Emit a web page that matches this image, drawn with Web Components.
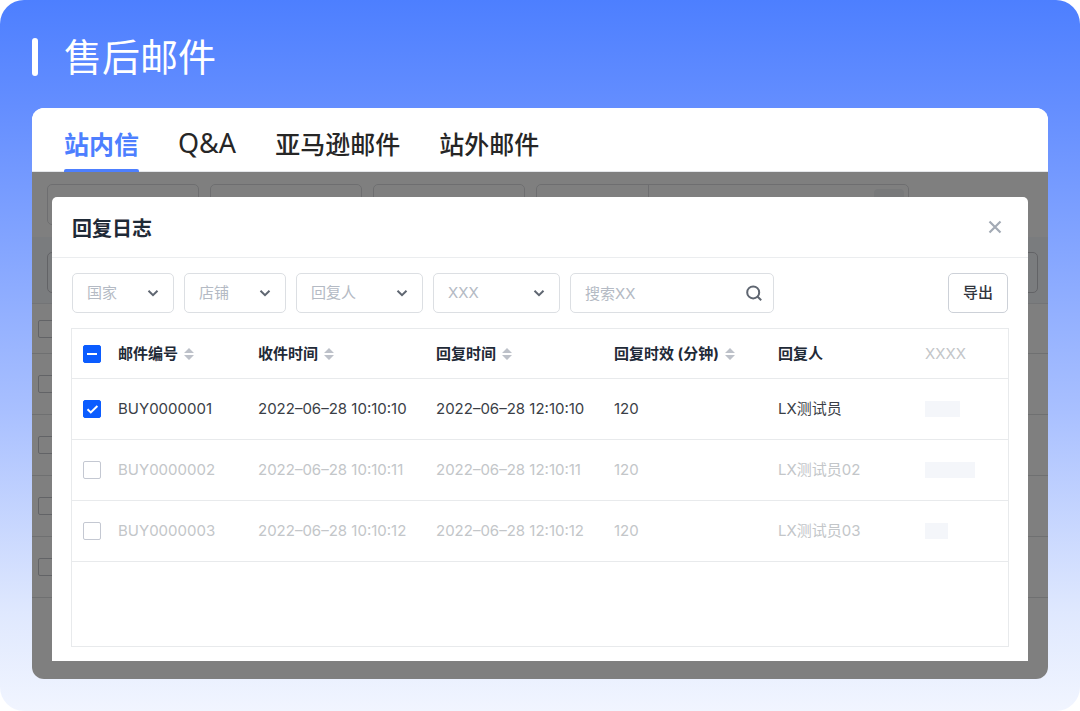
<!DOCTYPE html>
<html lang="zh-CN">
<head>
<meta charset="utf-8">
<meta name="viewport" content="width=device-width, initial-scale=1">
<title>售后邮件</title>
<style>
  body {
    margin: 0;
    background: #fff;
    font-family: Inter, "Noto Sans CJK SC", sans-serif;
    font-size: 15px;
    line-height: 20px;
    --line: #e8eaec;
    --field-line: #dcdfe3;
    --muted: #b4bac4;
    --ink: #1f2a37;
    --primary: #0b5cff;
  }
</style>
</head>
<body>
<mail-page>
  <page-heading slot="heading">售后邮件</page-heading>
  <tab-bar slot="tabs"></tab-bar>
  <mail-backdrop slot="backdrop"></mail-backdrop>
  <log-dialog heading="回复日志">
    <filter-bar slot="filters">
      <filter-select label="国家" size="small"></filter-select>
      <filter-select label="店铺" size="small"></filter-select>
      <filter-select label="回复人"></filter-select>
      <filter-select label="XXX"></filter-select>
      <search-field label="搜索XX"></search-field>
      <export-button slot="action">导出</export-button>
    </filter-bar>
    <log-table></log-table>
  </log-dialog>
</mail-page>

<script>
function component(name, html, setup) {
  const template = document.createElement('template');
  template.innerHTML = html;
  customElements.define(name, class extends HTMLElement {
    constructor() {
      super();
      this.attachShadow({ mode: 'open' }).append(template.content.cloneNode(true));
    }
    connectedCallback() {
      if (setup && !this.ready) {
        this.ready = true;
        setup(this, this.shadowRoot);
      }
    }
  });
}

component('mail-page', `
  <style>
    :host {
      display: block; box-sizing: border-box; min-height: 100vh;
      padding: 33px 32px 32px; border-radius: 24px;
      background: linear-gradient(180deg, #4d7fff 0%, #648eff 15%, #a9c0ff 58%, #dfe8fe 86%, #f1f5ff 100%);
    }
    .card { margin-top: 27px; border-radius: 12px; overflow: hidden; background: #fff; }
    .stage { position: relative; padding: 25px 20px 18px; }
    .behind { position: absolute; inset: 0; overflow: hidden; }
    .mask { position: absolute; inset: 0; background: rgba(0, 0, 0, .5); }
    .front { position: relative; }
  </style>
  <slot name="heading"></slot>
  <main class="card">
    <slot name="tabs"></slot>
    <div class="stage">
      <div class="behind" aria-hidden="true" inert><slot name="backdrop"></slot></div>
      <div class="mask"></div>
      <div class="front"><slot></slot></div>
    </div>
  </main>`);

component('page-heading', `
  <style>
    :host { display: flex; align-items: center; gap: 26px; height: 48px; color: #fff; }
    .bar { width: 6px; height: 38px; border-radius: 3px; background: #fff; }
    h1 { margin: 0 0 4px; font: 400 38px/44px "Noto Sans CJK SC", sans-serif; }
  </style>
  <span class="bar"></span><h1><slot></slot></h1>`);

component('tab-bar', `
  <style>
    :host { display: block; position: relative; z-index: 1; background: #fff; border-bottom: 1px solid #e4e6ea; }
    nav { display: flex; gap: 39px; padding: 0 32px; height: 63px; }
    a {
      position: relative; display: flex; align-items: center; padding-top: 7px; color: #262626;
      font: 500 25px/36px "Noto Sans CJK SC", sans-serif; text-decoration: none;
    }
    a[aria-current] { color: #4d7fff; font-weight: 700; }
    a[aria-current]::after {
      content: ""; position: absolute; left: 0; right: 0; bottom: -1px;
      height: 3px; border-radius: 2px 2px 0 0; background: #4d7fff;
    }
    .latin { font: 400 27px/36px "Noto Sans", sans-serif; }
  </style>
  <nav>
    <a href="#inbox" aria-current="page">站内信</a>
    <a href="#qa" class="latin">Q&amp;A</a>
    <a href="#amazon">亚马逊邮件</a>
    <a href="#external">站外邮件</a>
  </nav>`);

component('check-box', `
  <style>
    :host { display: grid; width: 18px; height: 18px; }
    input, svg { grid-area: 1 / 1; width: 18px; height: 18px; }
    input {
      appearance: none; box-sizing: border-box; margin: 0;
      border: 1px solid var(--box-line, #c4c8d2); border-radius: 2px; background: var(--box-fill, #fff);
    }
    input:checked, input:indeterminate { background: var(--primary); border-color: var(--primary); }
    svg { fill: none; stroke: #fff; stroke-width: 2; pointer-events: none; }
    path { display: none; }
    input:checked ~ svg .tick, input:indeterminate ~ svg .dash { display: inline; }
  </style>
  <input type="checkbox">
  <svg viewBox="0 0 18 18" aria-hidden="true">
    <path class="tick" d="M4.5 9.2 7.8 12.4 14.4 6"/>
    <path class="dash" d="M4 9H14"/>
  </svg>`, (host, root) => {
  const input = root.querySelector('input');
  input.setAttribute('aria-label', host.getAttribute('label') || '选择');
  input.checked = host.getAttribute('state') === 'on';
  input.indeterminate = host.getAttribute('state') === 'mixed';
});

component('mail-backdrop', `
  <style>
    :host { display: block; --box-line: #c4c6cc; --box-fill: transparent; }
    .row { display: flex; gap: 11px; padding: 12px 10px 12px 15px; }
    .field { box-sizing: border-box; width: 152px; height: 41px; border: 1px solid #dcdde0; border-radius: 5px; }
    .wide { display: flex; justify-content: flex-end; width: 373px; }
    .wide::before { content: ""; width: 1px; margin: 0 auto 0 111px; background: #dcdde0; }
    .chip { width: 30px; height: 30px; margin: 4px; border-radius: 4px; background: #f0f2f5; }
    .tools { justify-content: space-between; padding: 15px 10px 10px 15px; background: #f5f8fc; border-bottom: 1px solid #e6e8ec; }
    .tools .field { border-color: #c4c6cc; }
    .item { box-sizing: border-box; display: flex; align-items: center; height: 61px; padding-left: 6px; border-bottom: 1px solid #dfe0e3; }
    .head { height: 50px; }
  </style>
  <div class="row">
    <div class="field"></div><div class="field"></div><div class="field"></div>
    <div class="field wide"><div class="chip"></div></div>
  </div>
  <div class="row tools"><div class="field"></div><div class="field"></div></div>
  <div class="item head"><check-box></check-box></div>
  <div class="item"><check-box></check-box></div>
  <div class="item"><check-box></check-box></div>
  <div class="item"><check-box></check-box></div>
  <div class="item"><check-box></check-box></div>`);

component('log-dialog', `
  <style>
    :host { display: block; border-radius: 5px 5px 0 0; background: #fff; }
    header {
      display: flex; align-items: center; justify-content: space-between;
      height: 60px; padding: 0 26px 0 20px; border-bottom: 1px solid #ebedef;
    }
    h2 { margin: 0; padding-top: 3px; color: var(--ink); font-size: 20px; line-height: 28px; font-weight: 700; }
    button { display: grid; padding: 0; border: 0; background: none; }
    svg { width: 14px; height: 14px; fill: none; stroke: #a3aab5; stroke-width: 2.2; }
    .body { padding: 15px 19px 14px; }
  </style>
  <section role="dialog" aria-labelledby="title">
    <header>
      <h2 id="title"></h2>
      <button type="button" aria-label="关闭"><svg viewBox="0 0 14 14"><path d="M1.5 1.5 12.5 12.5M12.5 1.5 1.5 12.5"/></svg></button>
    </header>
    <div class="body"><slot name="filters"></slot><slot></slot></div>
  </section>`, (host, root) => {
  root.querySelector('h2').textContent = host.getAttribute('heading');
});

component('filter-bar', `
  <style>
    :host { display: flex; justify-content: space-between; padding: 0 1px; margin-bottom: 15px; }
    .fields { display: flex; gap: 10px; }
  </style>
  <div class="fields"><slot></slot></div><slot name="action"></slot>`);

component('filter-select', `
  <style>
    :host { display: grid; width: 127px; align-items: center; }
    :host([size="small"]) { width: 102px; }
    select, svg { grid-area: 1 / 1; }
    select {
      appearance: none; box-sizing: border-box; width: 100%; height: 40px; padding: 0 32px 0 14px;
      border: 1px solid var(--field-line); border-radius: 5px; background: #fff;
      color: var(--muted); font: inherit;
    }
    svg { justify-self: end; width: 12px; height: 12px; margin-right: 15px; fill: none; stroke: #5f6671; stroke-width: 2; pointer-events: none; }
  </style>
  <select><option></option></select>
  <svg viewBox="0 0 12 12" aria-hidden="true"><path d="M1.5 3.8 6 8.2 10.5 3.8"/></svg>`, (host, root) => {
  root.querySelector('select').setAttribute('aria-label', host.getAttribute('label'));
  root.querySelector('option').textContent = host.getAttribute('label');
});

component('search-field', `
  <style>
    :host { display: grid; width: 204px; align-items: center; }
    input, button { grid-area: 1 / 1; }
    input {
      box-sizing: border-box; width: 100%; height: 40px; padding: 0 40px 0 14px;
      border: 1px solid var(--field-line); border-radius: 5px; background: #fff; color: var(--ink); font: inherit;
    }
    input::placeholder { color: var(--muted); opacity: 1; }
    button { justify-self: end; display: grid; margin-right: 12px; padding: 0; border: 0; background: none; }
    svg { width: 16px; height: 16px; fill: none; stroke: #5f6671; stroke-width: 2; }
  </style>
  <input type="text">
  <button type="button" aria-label="搜索"><svg viewBox="0 0 16 16"><circle cx="7.2" cy="7.4" r="6"/><path d="M11.4 11.6 15.2 15.2"/></svg></button>`, (host, root) => {
  const input = root.querySelector('input');
  input.placeholder = host.getAttribute('label');
  input.setAttribute('aria-label', host.getAttribute('label'));
});

component('export-button', `
  <style>
    :host { display: block; }
    button {
      box-sizing: border-box; height: 40px; padding: 0 14px; border: 1px solid #cdd1d8;
      border-radius: 5px; background: #fff; color: #32363e; font: inherit; font-weight: 500;
    }
  </style>
  <button type="button"><slot></slot></button>`);

component('sort-header', `
  <style>
    :host { display: inline-block; }
    button { display: flex; align-items: center; gap: 6px; padding: 0; border: 0; background: none; color: inherit; font: inherit; white-space: nowrap; }
    svg { width: 10px; height: 14px; fill: #bdc1c9; }
  </style>
  <button type="button"><slot></slot><svg viewBox="0 0 10 14" aria-hidden="true"><path d="M5 1 10 6H0ZM0 8H10L5 13Z"/></svg></button>`);

component('log-table', `
  <style>
    :host { display: block; box-sizing: border-box; min-height: 319px; border: 1px solid var(--line); }
    table { width: 100%; table-layout: fixed; border-collapse: separate; border-spacing: 0; }
    th, td { box-sizing: border-box; height: 61px; padding: 0; border-bottom: 1px solid var(--line); text-align: left; font-weight: 400; white-space: nowrap; }
    th { height: 50px; color: var(--ink); font-weight: 700; }
    td { color: #3a3e46; }
    th:first-child, td:first-child { padding-left: 11px; }
    .off td, th.off { color: #c3c6c9; }
    th.off { font-weight: 400; }
    .block { display: block; height: 16px; background: #f4f6fa; }
    .c0 { width: 46px; } .c1 { width: 140px; } .c2, .c3 { width: 178px; } .c4 { width: 164px; } .c5 { width: 147px; }
    .w1 { width: 35px; } .w2 { width: 50px; } .w3 { width: 23px; }
  </style>
  <table>
    <colgroup><col class="c0"><col class="c1"><col class="c2"><col class="c3"><col class="c4"><col class="c5"><col></colgroup>
    <thead><tr>
      <th scope="col"><check-box state="mixed" label="全选"></check-box></th>
      <th scope="col"><sort-header>邮件编号</sort-header></th>
      <th scope="col"><sort-header>收件时间</sort-header></th>
      <th scope="col"><sort-header>回复时间</sort-header></th>
      <th scope="col"><sort-header>回复时效 (分钟)</sort-header></th>
      <th scope="col">回复人</th>
      <th scope="col" class="off">XXXX</th>
    </tr></thead>
    <tbody>
      <tr><td><check-box state="on"></check-box></td><td>BUY0000001</td><td>2022–06–28 10:10:10</td><td>2022–06–28 12:10:10</td><td>120</td><td>LX测试员</td><td><span class="block w1"></span></td></tr>
      <tr class="off"><td><check-box></check-box></td><td>BUY0000002</td><td>2022–06–28 10:10:11</td><td>2022–06–28 12:10:11</td><td>120</td><td>LX测试员02</td><td><span class="block w2"></span></td></tr>
      <tr class="off"><td><check-box></check-box></td><td>BUY0000003</td><td>2022–06–28 10:10:12</td><td>2022–06–28 12:10:12</td><td>120</td><td>LX测试员03</td><td><span class="block w3"></span></td></tr>
    </tbody>
  </table>`);
</script>
</body>
</html>
